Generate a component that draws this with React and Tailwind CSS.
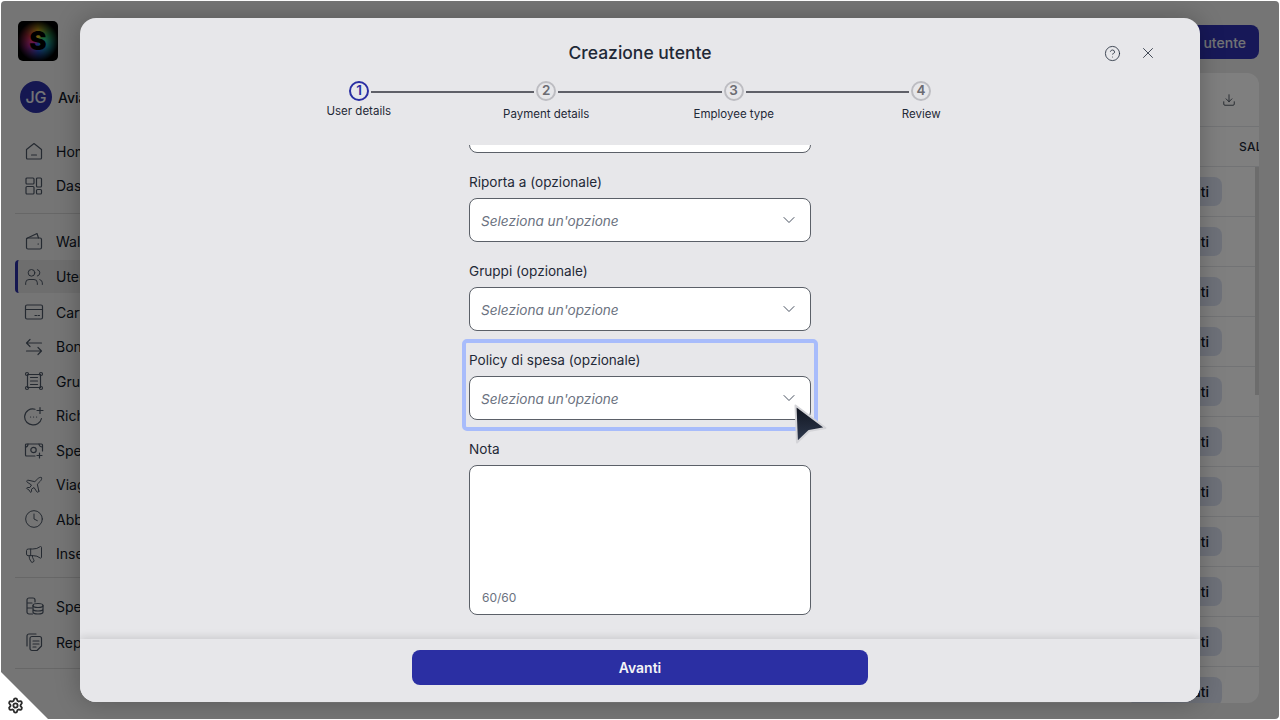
import React from "react";
import { ChevronDown, CircleHelp, X, Users, Plane, Clock, Megaphone, Download, Settings } from "lucide-react";

const Ic = ({ children }) => (
  <svg width="20" height="20" viewBox="0 0 20 20" fill="none" stroke="currentColor" strokeWidth="1.2" strokeLinecap="round" strokeLinejoin="round">
    {children}
  </svg>
);

const HomeI = () => <Ic><path d="M2.5 8.5 10 2.5l7.5 6V17a1 1 0 0 1-1 1h-13a1 1 0 0 1-1-1z" /><path d="M7.5 14h5" /></Ic>;
const DashI = () => <Ic><rect x="2" y="2" width="8" height="6" rx="1" /><rect x="12.5" y="2" width="5" height="9" rx="1" /><rect x="2" y="10.5" width="8" height="7.5" rx="1" /><rect x="12.5" y="13.5" width="5" height="4.5" rx="1" /></Ic>;
const WalletI = () => <Ic><path d="M2.5 7.5 13 2.5 14.5 7" /><rect x="2.5" y="7" width="15" height="11" rx="1.5" /><path d="M14 13h.5" /></Ic>;
const CardI = () => <Ic><rect x="1.5" y="3" width="17" height="14" rx="1.5" /><path d="M1.5 7.5h17M11 13.5h1.5M14 13.5h1.5" /></Ic>;
const TransferI = () => <Ic><path d="M2.5 6h15M6 2.5 2.5 6 6 9.5" /><path d="M17.5 14h-15M14 10.5 17.5 14 14 17.5" /></Ic>;
const GroupI = () => <Ic><rect x="3.5" y="3.5" width="13" height="13" /><circle cx="3" cy="3" r="1.5" /><circle cx="17" cy="3" r="1.5" /><circle cx="3" cy="17" r="1.5" /><circle cx="17" cy="17" r="1.5" /><path d="M6.5 6.5h7M6.5 10h7M6.5 13.5h7" /></Ic>;
const ReqI = () => <Ic><path d="M11 3.2A8 8 0 1 0 9.5 18.8c1.5 0 3-.4 4.2-1.1 1.5-.9 3.3-2.7 3.8-5.2" /><path d="M6.5 11h.1M9.5 11h.1M12.5 11h.1M16 1.5v6M13 4.5h6" /></Ic>;
const CashI = () => <Ic><path d="M11 16H2.5a1 1 0 0 1-1-1V5a1 1 0 0 1 1-1h15a1 1 0 0 1 1 1v6" /><circle cx="9.5" cy="10" r="2.7" /><path d="M1.5 7c1.5 0 2.500-1 2.500-3M15 4c0 1.500 1.500 3 3.500 3M15.500 13v5M13 15.500h5" /></Ic>;
const DataI = () => <Ic><path d="M8.5 18H5a2 2 0 0 1-2-2V4a2 2 0 0 1 2-2h4a2 2 0 0 1 2 2v2M3 7h5M3 12h5" /><ellipse cx="14" cy="9.5" rx="5" ry="2" /><path d="M9 9.5V16c0 1.1 2.2 2 5 2s5-.9 5-2V9.5M9 13c0 1.1 2.2 2 5 2s5-.9 5-2" /></Ic>;
const ReportI = () => <Ic><path d="M3 14V4a2 2 0 0 1 2-2h7" /><path d="M6 6.5a2 2 0 0 1 2-2h7.5a2 2 0 0 1 2 2V14L13 18.5H8a2 2 0 0 1-2-2zM9 9h6M9 12h6M9 15h3" /></Ic>;
const UsersI = () => <Users size={20} strokeWidth={1.2} />;
const PlaneI = () => <Plane size={20} strokeWidth={1.2} />;
const ClockI = () => <Clock size={20} strokeWidth={1.2} />;
const MegaI = () => <Megaphone size={20} strokeWidth={1.2} />;

function NavRow({ icon, label, active }) {
  return (
    <div className={active
      ? "my-[1.75px] flex h-[33px] items-center gap-[12px] rounded-l-[4px] border-l-[3px] border-[#2b2fa3] bg-[#dcdcdc] pl-[6px] text-[#111827]"
      : "flex h-[34.5px] items-center gap-[12px] pl-[9px] text-[#111827]"}>
      <span className="flex w-[20px] justify-center text-[#4b5563]">{icon}</span>
      <span className="whitespace-nowrap text-[14px]">{label}</span>
    </div>
  );
}

function Sidebar() {
  return (
    <aside className="flex w-[220px] shrink-0 flex-col pl-[14px] pr-[10px]">
      <div className="ml-[3px] mt-[20px] flex h-[40px] w-[40px] items-center justify-center rounded-[5px] bg-[radial-gradient(circle,transparent_25%,#000_72%),conic-gradient(#f5c518,#35c46a,#18b4c9,#2d5be3,#c02aa8,#e0364a,#f5c518)]">
        <span className="text-[26px] font-black leading-none text-black">S</span>
      </div>
      <div className="ml-[5px] mt-[20px] flex items-center gap-[6px]">
        <div className="flex h-[32px] w-[32px] items-center justify-center rounded-full bg-[#2b2fa3] text-[16px] font-medium text-[#e5e7eb]">JG</div>
        <span className="text-[14px] font-medium text-[#111827]">Aviato</span>
      </div>
      <div className="mt-[21px] flex flex-col">
        <NavRow icon={<HomeI />} label="Home" />
        <NavRow icon={<DashI />} label="Dashboard" />
      </div>
      <div className="mb-[10px] mt-[10px] h-px bg-[#cfcfcf]" />
      <div className="flex flex-col">
        <NavRow icon={<WalletI />} label="Wallet" />
        <NavRow active icon={<UsersI />} label="Utenti" />
        <NavRow icon={<CardI />} label="Carte" />
        <NavRow icon={<TransferI />} label="Bonifici" />
        <NavRow icon={<GroupI />} label="Gruppi" />
        <NavRow icon={<ReqI />} label="Richieste" />
        <NavRow icon={<CashI />} label="Spese" />
        <NavRow icon={<PlaneI />} label="Viaggi" />
        <NavRow icon={<ClockI />} label="Abbonamenti" />
        <NavRow icon={<MegaI />} label="Inserzioni" />
      </div>
      <div className="mb-[11px] mt-[6px] h-px bg-[#cfcfcf]" />
      <div className="flex flex-col gap-[1.5px]">
        <NavRow icon={<DataI />} label="Spese" />
        <NavRow icon={<ReportI />} label="Report" />
      </div>
      <div className="mt-[8px] h-px bg-[#cfcfcf]" />
    </aside>
  );
}

function Main() {
  return (
    <main className="flex min-w-0 flex-1 flex-col items-stretch pr-[20px] pt-[24px]">
      <div className="flex justify-end">
        <button className="flex h-[34px] items-center rounded-[8px] bg-[#2f31b0] px-[13px] text-[14px] font-medium text-[#e5e7eb]">Nuovo utente</button>
      </div>
      <div className="mt-[14px] flex h-[630px] flex-col overflow-hidden rounded-[12px] bg-white">
        <div className="flex h-[54px] shrink-0 items-center justify-end border-b border-[#e5e7eb] pr-[23px] text-[#1f2937]">
          <Download size={14} strokeWidth={1.3} />
        </div>
        <div className="flex h-[40px] shrink-0 items-center justify-end border-b border-[#e5e7eb]">
          <span className="w-[20px] overflow-hidden whitespace-nowrap text-[12px] font-medium tracking-[0.02em] text-[#1f2937]">SALDO</span>
        </div>
        <div className="relative flex-1 overflow-hidden">
          <div className="absolute right-0 top-0 h-[228px] w-[4px] bg-[#d8d8d8]" />
          {Array.from({ length: 11 }).map((_, i) => (
            <div key={i} className="flex h-[50px] items-center justify-end border-b border-[#e5e7eb] pr-[37px]">
              <span className="flex h-[29px] items-center rounded-[8px] bg-[#dde3f3] pl-[12px] pr-[13px] text-[14px] font-medium text-[#111827]">Assegnati</span>
            </div>
          ))}
        </div>
      </div>
    </main>
  );
}

function Field({ label, highlight }) {
  return (
    <div className="relative mt-[19px]">
      {highlight && <div className="pointer-events-none absolute -bottom-[11px] -left-[7px] -right-[7px] -top-[11.5px] rounded-[5px] border-4 border-[#a8bcfb]" />}
      <label className="block text-[13.6px] leading-[20px] text-[#1f2937]">{label}</label>
      <div className="mt-[6px] flex h-[44px] items-center justify-between rounded-[8px] border border-[#5b6068] bg-white pl-[11px] pr-[11px]">
        <span className="pt-[2px] text-[13.6px] italic text-[#6b7280]">Seleziona un'opzione</span>
        <ChevronDown size={20} strokeWidth={1.1} className="text-[#374151]" />
      </div>
    </div>
  );
}

function Step({ n, active }) {
  return (
    <div className={active
      ? "flex h-[20px] w-[20px] shrink-0 items-center justify-center rounded-full border-2 border-[#2b2fa3] text-[13.5px] font-semibold leading-none text-[#2b2fa3]"
      : "flex h-[20px] w-[20px] shrink-0 items-center justify-center rounded-full border-2 border-[#bdbdc2] text-[13.5px] font-semibold leading-none text-[#6b6b72]"}>
      {n}
    </div>
  );
}

function Line() {
  return <div className="mx-[2px] mt-[2px] h-[2px] flex-1 bg-[#5f6068]" />;
}

function Modal() {
  const labels = ["User details", "Payment details", "Employee type", "Review"];
  return (
    <div className="absolute left-[80px] top-[18px] flex h-[684px] w-[1120px] flex-col overflow-hidden rounded-[16px] bg-[#e7e7ea] shadow-[0_0_24px_rgba(0,0,0,0.25)]">
      <header className="h-[127px] shrink-0 pt-[21px]">
        <div className="grid h-[28px] grid-cols-[1fr_auto_1fr] items-center">
          <div />
          <h1 className="pt-[1px] text-[17.5px] font-medium text-[#1f2937]">Creazione utente</h1>
          <div className="flex items-center justify-end gap-[18.5px] pr-[43px] text-[#1f2937]">
            <CircleHelp size={17} strokeWidth={1.15} />
            <X size={18} strokeWidth={1.1} />
          </div>
        </div>
        <div className="mx-auto mt-[14px] flex w-[582px] items-center">
          <Step n={1} active />
          <Line />
          <Step n={2} />
          <Line />
          <Step n={3} />
          <Line />
          <Step n={4} />
        </div>
        <div className="mx-auto grid w-[750px] grid-cols-4 text-center text-[11.5px] leading-[16px] text-[#1f2937]">
          {labels.map((l, i) => (
            <span key={l} className={i === 0 ? "mt-[2px]" : "mt-[5px]"}>{l}</span>
          ))}
        </div>
      </header>
      <div className="min-h-0 flex-1 overflow-hidden">
        <div className="mx-auto w-[342px]">
          <div className="-mt-[36px] h-[44px] rounded-[8px] border border-[#5b6068] bg-white" />
          <Field label="Riporta a (opzionale)" />
          <Field label="Gruppi (opzionale)" />
          <Field label="Policy di spesa (opzionale)" highlight />
          <div className="mt-[19px]">
            <label className="block text-[13.6px] leading-[20px] text-[#1f2937]">Nota</label>
            <div className="mt-[6px] flex h-[150px] items-end rounded-[8px] border border-[#5b6068] bg-white pb-[8px] pl-[12px] text-[12px] leading-[16px] text-[#6b7280]">60/60</div>
          </div>
        </div>
      </div>
      <footer className="flex h-[63px] shrink-0 justify-center bg-[#e7e7ea] pt-[11px] shadow-[0_-2px_8px_rgba(0,0,0,0.12)]">
        <button className="h-[35px] w-[456px] rounded-[8px] bg-[#2b2fa3] text-[14px] font-semibold text-[#f3f4f6]">Avanti</button>
      </footer>
    </div>
  );
}

export default function App() {
  return (
    <div className="relative h-[720px] w-[1280px] overflow-hidden bg-white font-['Inter',sans-serif]">
      <div className="absolute inset-px overflow-hidden rounded-[4px]">
        <div className="flex h-[718px] w-[1278px] bg-[#ebebeb]">
          <Sidebar />
          <Main />
        </div>
        <div className="absolute inset-0 bg-black/50" />
      </div>
      <Modal />
      <svg className="pointer-events-none absolute left-[790px] top-[400px]" width="40" height="46" viewBox="0 0 40 46">
        <defs>
          <linearGradient id="cur" x1="0" y1="0" x2="0" y2="1">
            <stop offset="0" stopColor="#10141f" />
            <stop offset="1" stopColor="#2f3a4f" />
          </linearGradient>
        </defs>
        <path d="M5.5 5.500 35.500 28 19 31 7 42.500z" fill="url(#cur)" stroke="#d4d4d8" strokeWidth="2" strokeLinejoin="round" />
      </svg>
      <div className="absolute bottom-px left-0 h-[48px] w-[48px] bg-white [clip-path:polygon(0_0,100%_100%,0_100%)]">
        <Settings size={17} strokeWidth={2.6} className="absolute bottom-[5px] left-[6.5px] text-[#2b2b2b]" />
      </div>
    </div>
  );
}
